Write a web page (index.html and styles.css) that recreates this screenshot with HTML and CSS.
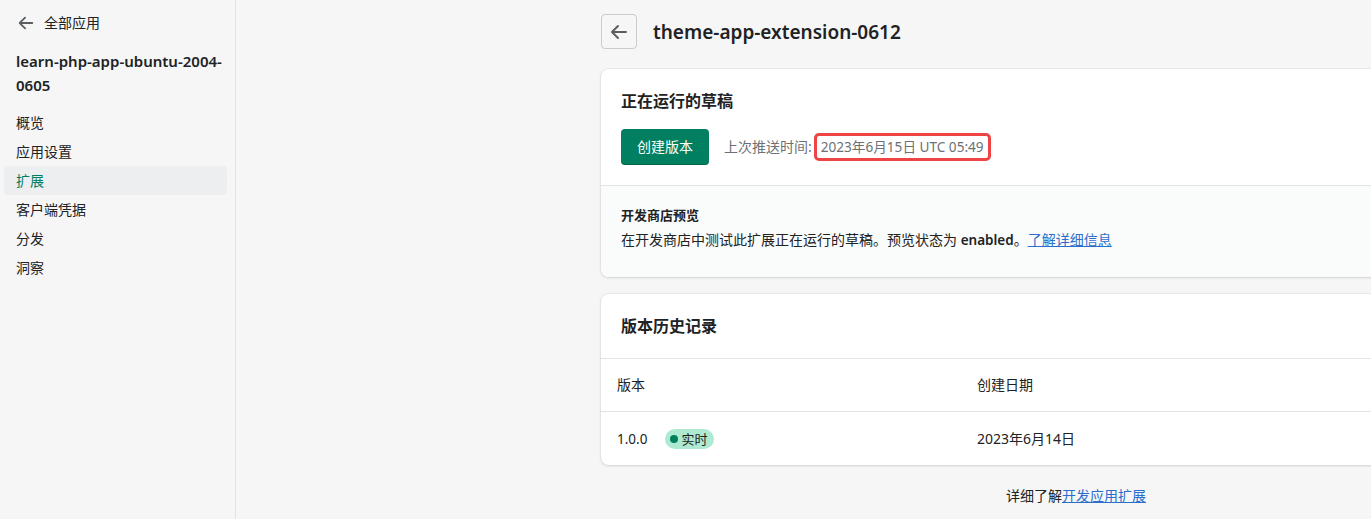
FILE: index.html
```html
<!DOCTYPE html>
<html lang="zh-CN">
<head>
<meta charset="utf-8">
<title>theme-app-extension-0612</title>
<link rel="stylesheet" href="styles.css">
</head>
<body>
<div class="app">
  <aside class="sidebar">
    <a class="back-link" href="#">
      <svg class="arrow" width="18" height="18" viewBox="0 0 20 20"><path d="M17 9H5.41l4.3-4.29a1 1 0 0 0-1.42-1.42l-6 6a1 1 0 0 0 0 1.42l6 6a1 1 0 0 0 1.42-1.42L5.41 11H17a1 1 0 0 0 0-2z" fill="#5c5f62"/></svg>
      <span>全部应用</span>
    </a>
    <div class="app-name">learn-php-app-ubuntu-2004-<br>0605</div>
    <nav class="nav">
      <a class="nav-item" href="#">概览</a>
      <a class="nav-item" href="#">应用设置</a>
      <a class="nav-item active" href="#">扩展</a>
      <a class="nav-item" href="#">客户端凭据</a>
      <a class="nav-item" href="#">分发</a>
      <a class="nav-item" href="#">洞察</a>
    </nav>
  </aside>
  <main class="main">
    <div class="column">
      <header class="page-header">
        <button class="back-btn" aria-label="返回">
          <svg width="20" height="20" viewBox="0 0 20 20"><path d="M17 9H5.41l4.3-4.29a1 1 0 0 0-1.42-1.42l-6 6a1 1 0 0 0 0 1.42l6 6a1 1 0 0 0 1.42-1.42L5.41 11H17a1 1 0 0 0 0-2z" fill="#5c5f62"/></svg>
        </button>
        <h1 class="page-title">theme-app-extension-0612</h1>
      </header>

      <section class="card">
        <div class="card-section">
          <h2 class="card-title">正在运行的草稿</h2>
          <div class="draft-row">
            <button class="primary-btn">创建版本</button>
            <span class="push-label">上次推送时间:</span>
            <span class="push-date">2023年6月15日 UTC 05:49</span>
          </div>
        </div>
        <div class="card-section subdued">
          <h3 class="sub-title">开发商店预览</h3>
          <p class="sub-text">在开发商店中测试此扩展正在运行的草稿。预览状态为 <strong>enabled</strong>。<a class="link" href="#">了解详细信息</a></p>
        </div>
      </section>

      <section class="card">
        <div class="card-head">
          <h2 class="card-title">版本历史记录</h2>
        </div>
        <div class="table">
          <div class="t-row t-head">
            <div class="t-cell">版本</div>
            <div class="t-cell">创建日期</div>
          </div>
          <div class="t-row">
            <div class="t-cell version-cell"><span>1.0.0</span><span class="badge"><span class="dot"></span>实时</span></div>
            <div class="t-cell">2023年6月14日</div>
          </div>
        </div>
      </section>

      <p class="footer-help">详细了解<a class="link" href="#">开发应用扩展</a></p>
    </div>
  </main>
</div>
</body>
</html>
```
FILE: styles.css
```css
* { box-sizing: border-box; }
html, body { margin: 0; padding: 0; }
body {
  background: #f6f6f7;
  color: #202223;
  font-family: "Segoe UI", "Noto Sans", "Noto Sans CJK SC", sans-serif;
  font-size: 14px;
  line-height: 20px;
  overflow: hidden;
  width: 1371px;
  height: 519px;
}
.app { display: flex; height: 519px; }
.sidebar {
  width: 236px;
  flex-shrink: 0;
  border-right: 1px solid #e1e3e5;
  background: #f6f6f7;
  padding: 12px 8px 0 4px;
}
.back-link {
  display: flex;
  align-items: center;
  gap: 9px;
  padding-left: 13px;
  height: 22px;
  color: #202223;
  text-decoration: none;
}
.back-link .arrow { display: block; }
.app-name {
  margin-top: 15px;
  margin-right: -8px;
  padding-left: 12px;
  font-size: 15px;
  font-weight: 600;
  line-height: 24px;
  white-space: nowrap;
}
.nav { display: flex; flex-direction: column; margin-top: 11px; }
.nav-item {
  display: block;
  height: 29px;
  line-height: 29px;
  padding-left: 12px;
  color: #202223;
  text-decoration: none;
  border-radius: 4px;
}
.nav-item.active { background: #edeeef; color: #007f5f; }

.main { flex: 1; min-width: 0; padding-left: 365px; overflow: hidden; }
.column { width: 950px; }
.page-header {
  display: flex;
  align-items: center;
  gap: 16px;
  padding-top: 14px;
  margin-bottom: 20px;
}
.back-btn {
  width: 36px;
  height: 35px;
  border: 1px solid #c9cccf;
  border-radius: 4px;
  background: #f6f6f7;
  display: flex;
  align-items: center;
  justify-content: center;
  padding: 0;
}
.page-title {
  margin: 0;
  font-size: 19px;
  font-weight: 600;
  line-height: 28px;
}
.card {
  background: #fff;
  border-radius: 8px;
  box-shadow: 0 0 0 1px rgba(63,63,68,0.05), 0 1px 3px 0 rgba(63,63,68,0.15);
  overflow: hidden;
  margin-bottom: 17px;
}
.card-section { padding: 20px 20px 20px; }
.card-title {
  margin: 0;
  font-size: 16px;
  font-weight: 600;
  line-height: 24px;
}
.draft-row {
  display: flex;
  align-items: center;
  margin-top: 16px;
}
.primary-btn {
  width: 88px;
  height: 36px;
  border: 0;
  border-radius: 4px;
  background: #008060;
  color: #fff;
  font: inherit;
  font-size: 14px;
  padding: 0;
  box-shadow: inset 0 -1px 0 rgba(0,0,0,0.2);
}
.push-label { color: #6d7175; margin-left: 15px; }
.push-date {
  color: #6d7175;
  border: 3px solid #ef4444;
  border-radius: 5px;
  padding: 1px 4px;
  line-height: 20px;
  margin-left: 2px;
  font-size: 13.6px;
}
.card-section.subdued {
  background: #fafbfb;
  border-top: 1px solid #e1e3e5;
  padding: 20px 20px 27px;
}
.sub-title {
  margin: 0;
  font-size: 13px;
  font-weight: 600;
  line-height: 18px;
}
.sub-text { margin: 6px 0 0; }
.sub-text strong { font-weight: 600; font-size: 13.5px; }
.link { color: #2c6ecb; text-decoration: underline; }

.card-head { padding: 20px; border-bottom: 1px solid #e1e3e5; }
.table { display: flex; flex-direction: column; }
.t-row {
  display: grid;
  grid-template-columns: 360px 1fr;
  height: 53px;
  align-items: center;
  padding-left: 16px;
}
.t-head { height: 53px; border-bottom: 1px solid #e1e3e5; }
.version-cell { display: flex; align-items: center; gap: 18px; }
.version-cell > span:first-child { font-size: 13.5px; }
.badge {
  display: inline-flex;
  align-items: center;
  gap: 3px;
  height: 20px;
  padding: 0 7px 0 5px;
  border-radius: 10px;
  background: #aee9d1;
  font-size: 13px;
  color: #202223;
}
.dot { width: 8px; height: 8px; border-radius: 50%; background: #007f5f; }
.footer-help {
  margin: 20px 0 0;
  text-align: center;
  line-height: 22px;
}
```
